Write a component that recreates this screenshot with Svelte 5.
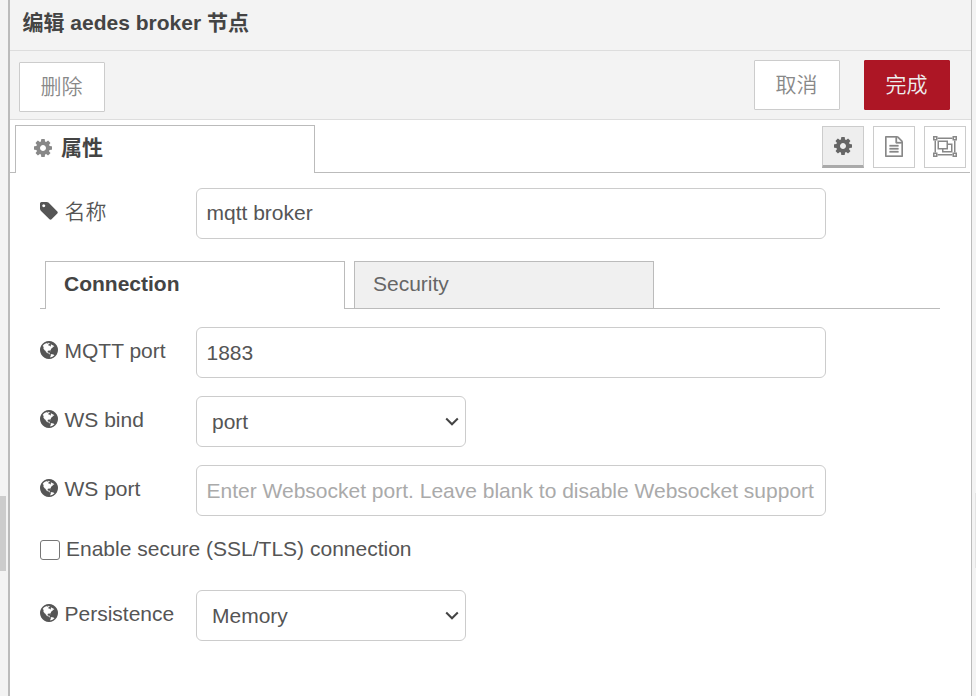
<script>
  const cog = 'M1152 896q0-106-75-181t-181-75-181 75-75 181 75 181 181 75 181-75 75-181zm512-109v222q0 12-8 23t-20 13l-185 28q-19 54-39 91 35 50 107 138 10 12 10 25t-9 23q-27 37-99 108t-94 71q-12 0-26-9l-138-108q-44 23-91 38-16 136-29 186-7 28-36 28h-222q-14 0-24.5-8.5t-11.5-21.5l-28-184q-49-16-90-37l-141 107q-10 9-25 9-14 0-25-11-126-114-165-168-7-10-7-23 0-12 8-23 15-21 51-66.5t54-70.5q-27-50-41-99l-183-27q-13-2-21-12.5t-8-23.5v-222q0-12 8-23t19-13l186-28q14-46 39-92-40-57-107-138-10-12-10-24 0-10 9-23 26-36 98.5-107.5t94.5-71.5q13 0 26 10l138 107q44-23 91-38 16-136 29-186 7-28 36-28h222q14 0 24.5 8.5t11.5 21.5l28 184q49 16 90 37l142-107q9-9 24-9 13 0 25 10 129 119 165 170 7 8 7 22 0 12-8 23-15 21-51 66.5t-54 70.5q26 50 41 98l183 28q13 2 21 12.5t8 23.5z';
  const tag = 'M576 448q0-53-37.5-90.5t-90.5-37.5-90.5 37.5-37.5 90.5 37.5 90.5 90.5 37.5 90.5-37.5 37.5-90.5zm1067 576q0 53-37 90l-491 492q-39 37-91 37-53 0-90-37l-715-716q-38-37-64.5-101t-26.5-117v-416q0-52 38-90t90-38h416q53 0 117 26.5t102 64.5l715 714q37 39 37 91z';
  const globe = 'M896 128q209 0 385.500 103t279.500 279.500 103 385.500-103 385.500-279.500 279.500-385.500 103-385.500-103-279.500-279.500-103-385.500 103-385.500 279.500-279.500 385.500-103zm274 521q-2 1-9.500 9.500t-13.500 9.500q2 0 4.500-5t5-11 3.500-7q6-7 22-15 14-6 52-12 34-8 51 11-2-2 9.500-13t14.500-12q3-2 15-4.500t15-7.500l2-22q-12 1-17.500-7t-6.500-21q0 2-6 8 0-7-4.500-8t-11.500 1-9 1q-10-3-15-7.500t-8-16.500-4-15q-2-5-9.500-10.500t-9.500-10.500q-1-2-2.500-5.500t-3-6.500-4-5.500-5.500-2.500-7 5-7.500 10-4.500 5q-3-2-6-1.500t-4.500 1-4.500 3-5 3.500q-3 2-8.500 3t-8.500 2q15-5-1-11-10-4-16-3 9-4 7.500-12t-8.500-14h5q-1-4-8.500-8.500t-17.500-8.500-13-6q-8-5-34-9.500t-33-.5q-5 6-4.500 10.500t4 14 3.500 12.500q1 6-5.500 13t-6.500 12q0 7 14 15.500t10 21.500q-3 8-16 16t-16 12q-5 8-1.500 18.500t10.500 16.500q2 2 1.500 4t-3.500 4.500-5.500 4-6.500 3.500l-3 2q-11 5-20.500-6t-13.500-26q-7-25-16-30-23-8-29 1-5-13-41-26-25-9-58-4 6-1 0-15-7-15-19-12 3-6 4-17.500t1-13.500q3-13 12-23 1-1 7-8.500t9.500-13.500.5-6q35 4 50-11 5-5 11.500-17t10.500-17q9-6 14-5.500t14.500 5.500 14.500 5q14 1 15.500-11t-7.500-20q12 1 3-17-4-7-8-9-12-4-27 5-8 4 2 8-1-1-9.500 10.500t-16.500 17.500-16-5q-1-1-5.500-13.500t-9.500-13.500q-8 0-16 15 3-8-11-15t-24-8q19-12-8-27-7-4-20.500-5t-19.500 4q-5 7-5.500 11.500t5 8 10.500 5.500 11.500 4 8.500 3q14 10 8 14-2 1-8.500 3.500t-11.500 4.500-6 4q-3 4 0 14t-2 14q-5-5-9-17.500t-7-16.500q7 9-25 6l-10-1q-4 0-16 2t-20.500 1-13.500-8q-4-8 0-20 1-4 4-2-4-3-11-9.500t-10-8.500q-46 15-94 41 6 1 12-1 5-2 13-6.500t10-5.500q34-14 42-7l5-5q14 16 20 25-7-4-30-1-20 6-22 12 7 12 5 18-4-3-11.500-10t-14.500-11-15-5q-16 0-22 1-146 80-235 222 7 7 12 8 4 1 5 9t2.500 11 11.500-3q9 8 3 19 1-1 44 27 19 17 21 21 3 11-10 18-1-2-9-9t-9-4q-3 5 .5 18.500t10.500 12.500q-7 0-9.500 16t-2.500 35.500-1 23.500l2 1q-3 12 5.500 34.500t21.500 19.500q-13 3 20 43 6 8 8 9 3 2 12 7.500t15 10 10 10.500q4 5 10 22.500t14 23.500q-2 6 9.500 20t10.500 23q-1 0-2.500 1t-2.500 1q3 7 15.500 14t15.500 13q1 3 2 10t3 11 8 2q2-20-24-62-15-25-17-29-3-5-5.500-15.500t-4.500-14.500q2 0 6 1.500t8.500 3.500 7.500 4 2 3q-3 7 2 17.500t12 18.500 17 19 12 13q6 6 14 19.500t0 13.500q9 0 20 10.500t17 19.500q5 8 8 26t5 24q2 7 8.500 13.500t12.500 9.500l16 8 13 7q5 2 18.500 10.500t21.500 11.500q10 4 16 4t14.500-2.500 13.500-3.500q15-2 29 15t21 21q36 19 55 11-2 1 .5 7.500t8 15.500 9 14.500 5.500 8.500q5 6 18 15t18 15q6-4 7-9-3 8 7 20t18 10q14-3 14-32-31 15-49-18 0-1-2.500-5.500t-4-8.500-2.500-8.500 0-7.500 5-3q9 0 10-3.500t-2-12.500-4-13q-1-8-11-20t-12-15q-5 9-16 8t-16-9q0 1-1.500 5.500t-1.500 6.500q-13 0-15-1 1-3 2.500-17.500t3.500-22.500q1-4 5.500-12t7.500-14.500 4-12.500-4.500-9.500-17.500-2.500q-19 1-26 20-1 3-3 10.500t-5 11.500-9 7q-7 3-24 2t-24-5q-13-8-22.500-29t-9.500-37q0-10 2.500-26.500t3-25-5.500-24.500q3-2 9-9.500t10-10.500q2-1 4.500-1.500t4.500 0 4-1.500 3-6q-1-1-4-3-3-3-4-3 7 3 28.500-1.500t27.500 1.500q15 11 22-2 0-1-2.500-9.500t-.5-13.500q5 27 29 9 3 3 15.500 5t17.500 5q3 2 7 5.500t5.500 4.500 5-.5 8.500-6.500q10 14 12 24 11 40 19 44 7 3 11 2t4.500-9.500 0-14-1.500-12.500l-1-8v-18l-1-8q-15-3-18.500-12t1.500-18.500 15-18.500q1-1 8-3.500t15.500-6.500 12.500-8q21-19 15-35 7 0 11-9-1 0-5-3t-7.500-5-4.500-2q9-5 2-16 5-3 7.500-11t7.500-10q9 12 21 2 7-8 1-16 5-7 20.500-10.500t18.500-9.500q7 2 8-2t1-12 3-12q4-5 15-9t13-5l17-11q3-4 0-4 18 2 31-11 10-11-6-20 3-6-3-9.500t-15-5.500q3-1 11.500-.5t10.500-1.500q15-10-7-16-17-5-43 12zm-163 877q206-36 351-189-3-3-12.500-4.500t-12.500-3.500q-18-7-24-8 1-7-2.500-13t-8-9-12.500-8-11-7q-2-2-7-6t-7-5.500-7.500-4.500-8.500-2-10 1l-3 1q-3 1-5.500 2.500t-5.500 3-4 3 0 2.500q-21-17-36-22-5-1-11-5.500t-10.500-7-10-1.500-11.500 7q-5 5-6 15t-2 13q-7-5 0-17.500t2-18.500q-3-6-10.500-4.500t-12 4.500-11.500 8.500-9 6.500-8.500 5.500-8.500 7.500q-3 4-6 12t-5 11q-2-4-11.500-6.500t-9.500-5.500q2 10 4 35t5 38q7 31-12 48-27 25-29 40-4 22 12 26 0 7-8 20.500t-7 21.500q0 6 2 16z';
  const file = 'M1596 380q28 28 48 76t20 88v1152q0 40-28 68t-68 28h-1344q-40 0-68-28t-28-68v-1600q0-40 28-68t68-28h896q40 0 88 20t76 48zm-444-244v376h376q-10-29-22-41l-313-313q-12-12-41-22zm384 1528v-1024h-416q-40 0-68-28t-28-68v-416h-768v1536h1280zm-1024-864q0-14 9-23t23-9h704q14 0 23 9t9 23v64q0 14-9 23t-23 9h-704q-14 0-23-9t-9-23v-64zm736 224q14 0 23 9t9 23v64q0 14-9 23t-23 9h-704q-14 0-23-9t-9-23v-64q0-14 9-23t23-9h704zm0 256q14 0 23 9t9 23v64q0 14-9 23t-23 9h-704q-14 0-23-9t-9-23v-64q0-14 9-23t23-9h704z';

  let name = $state('mqtt broker');
  let mqttPort = $state('1883');
  let wsPort = $state('');
  let secure = $state(false);
</script>

{#snippet icon(d)}
  <svg class="icon" viewBox="128 128 1536 1536"><path {d} /></svg>
{/snippet}

{#snippet dropdown(value)}
  <button class="field select">
    <span>{value}</span>
    <svg class="line" width="14" height="10" viewBox="0 0 14 10"><path d="M1.2 1.5 7 7.3l5.800-5.800" stroke="#444" stroke-width="2" /></svg>
  </button>
{/snippet}

<div class="page">
  <div class="gutter"><div class="thumb"></div></div>
  <main class="tray">
    <header>编辑 aedes broker 节点</header>
    <div class="toolbar">
      <button class="btn delete">删除</button>
      <div class="actions">
        <button class="btn">取消</button>
        <button class="btn primary">完成</button>
      </div>
    </div>

    <nav class="editor-tabs">
      <div class="tab active">{@render icon(cog)}<span>属性</span></div>
      <div class="tools">
        <button class="tool on" aria-label="cog">{@render icon(cog)}</button>
        <button class="tool" aria-label="file">
          <svg width="18" height="21" viewBox="128 0 1536 1792" stroke="currentColor" stroke-width="25"><path d={file} /></svg>
        </button>
        <button class="tool" aria-label="group">
          <svg class="line" width="24" height="21" viewBox="0 0 24 21" stroke="currentColor" stroke-width="1.5">
            <path d="M4.500 2.250h15M4.500 18.750h15M2.250 4.500v12M21.750 4.500v12" />
            <path d="M.75.75h3v3h-3zM20.250.75h3v3h-3zM.75 17.250h3v3h-3zM20.250 17.250h3v3h-3z" />
            <path d="M5.250 5.250h9v7.500h-9zM14.250 8.250h4.500v7.500h-9v-3" />
          </svg>
        </button>
      </div>
    </nav>

    <form>
      <div class="row first">
        <label for="name">{@render icon(tag)}<span>名称</span></label>
        <input id="name" class="field" bind:value={name} />
      </div>

      <div class="subtabs">
        <div class="tab active">Connection</div>
        <div class="tab">Security</div>
      </div>

      <div class="row">
        <label for="mqtt">{@render icon(globe)}<span>MQTT port</span></label>
        <input id="mqtt" class="field" bind:value={mqttPort} />
      </div>
      <div class="row">
        <div class="label">{@render icon(globe)}<span>WS bind</span></div>
        {@render dropdown('port')}
      </div>
      <div class="row">
        <label for="ws">{@render icon(globe)}<span>WS port</span></label>
        <input id="ws" class="field" bind:value={wsPort} placeholder="Enter Websocket port. Leave blank to disable Websocket support" />
      </div>
      <label class="check">
        <input type="checkbox" bind:checked={secure} />
        <span>Enable secure (SSL/TLS) connection</span>
      </label>
      <div class="row">
        <div class="label">{@render icon(globe)}<span>Persistence</span></div>
        {@render dropdown('Memory')}
      </div>
    </form>
  </main>
  <div class="right"><div class="thumb"></div></div>
</div>

<style>
  .page, .page * { box-sizing: border-box; }
  .page {
    display: flex;
    height: 696px;
    overflow: hidden;
    background: #f3f3f3;
    color: #555;
    font: 350 21px/30px "Liberation Sans", "Noto Sans CJK SC", sans-serif;
  }
  button, input { font: inherit; color: inherit; margin: 0; }
  svg { display: block; fill: currentColor; flex: none; }
  .line { fill: none; }
  .icon { width: 18px; height: 18px; }

  .gutter { width: 10px; padding-top: 496px; border-right: 2px solid #bbb; }
  .gutter .thumb { width: 6px; height: 75px; background: #ccc; }
  .right { width: 5px; border-left: 1px solid #bbb; padding: 493px 0 0 3px; }
  .right .thumb { height: 75px; background: #e4e4e4; }

  .tray { flex: 1; background: #fff; }
  header {
    height: 51px;
    padding: 8px 12.500px;
    background: #f3f3f3;
    border-bottom: 1px solid #ddd;
    font-weight: 700;
    color: #444;
  }
  .toolbar {
    display: flex;
    justify-content: space-between;
    height: 69px;
    padding: 9px 21px 0 9px;
    background: #f3f3f3;
    border-bottom: 1px solid #ddd;
  }
  .actions { display: flex; gap: 24px; }
  .btn {
    width: 86px;
    height: 50px;
    padding: 0 1px 0 0;
    border: 1px solid #ccc;
    border-radius: 1px;
    background: #fff;
    color: #888;
  }
  .delete { margin-top: 2px; }
  .primary { background: #ad1625; border-color: #ad1625; color: #eee; }

  .tab { border: 1px solid #bbb; border-bottom: 0; width: 300px; }
  .editor-tabs {
    display: flex;
    justify-content: space-between;
    height: 53px;
    padding: 5px 5px 0 5px;
    background: linear-gradient(#bbb, #bbb) 0 100% / 960px 1px no-repeat;
  }
  .editor-tabs .tab {
    display: flex;
    align-items: center;
    gap: 9px;
    height: 48px;
    padding: 0 0 4px 18px;
    background: #fff;
    color: #888;
    font-weight: 700;
  }
  .editor-tabs .tab span { color: #444; }
  .tools { display: flex; gap: 9px; padding-top: 1px; }
  .tool {
    display: flex;
    align-items: center;
    justify-content: center;
    width: 42px;
    height: 42px;
    padding: 0 0 1px;
    border: 1px solid #ccc;
    background: #fff;
    color: #888;
  }
  .on { padding: 0; background: #eee; border-bottom: 3px solid #aaa; color: #666; }

  form { padding: 15px 30px 0; }
  .row { display: flex; height: 51px; margin-bottom: 18px; }
  .row label, .label {
    display: flex;
    align-items: center;
    gap: 6.500px;
    width: 156px;
    height: 47px;
  }
  .row .icon { margin-top: -1px; }
  .field {
    width: 630px;
    height: 51px;
    padding: 0 9.500px;
    border: 1px solid #ccc;
    border-radius: 6px;
    background: #fff;
    outline: 0;
  }
  .field::placeholder { color: #aaa; opacity: 1; }
  .select {
    display: flex;
    align-items: center;
    justify-content: space-between;
    width: 270px;
    padding: 0 6px 0 15px;
  }
  .first { margin-bottom: 22px; }
  .first .field { padding-bottom: 2px; }
  .subtabs {
    display: flex;
    gap: 9px;
    height: 48px;
    width: 900px;
    margin-bottom: 18px;
    padding-left: 5px;
    background: linear-gradient(#bbb, #bbb) 0 100% / 100% 1px no-repeat;
  }
  .subtabs .tab {
    height: 47px;
    padding: 7px 18px;
    background: #f0f0f0;
    color: #666;
  }
  .subtabs .active { height: 48px; background: #fff; color: #444; font-weight: 700; }
  .check { display: flex; align-items: center; gap: 6px; height: 30px; margin-bottom: 26px; }
  .check input {
    appearance: none;
    width: 20px;
    height: 20px;
    margin-top: 1px;
    border: 1.500px solid #767676;
    border-radius: 3px;
  }
</style>
